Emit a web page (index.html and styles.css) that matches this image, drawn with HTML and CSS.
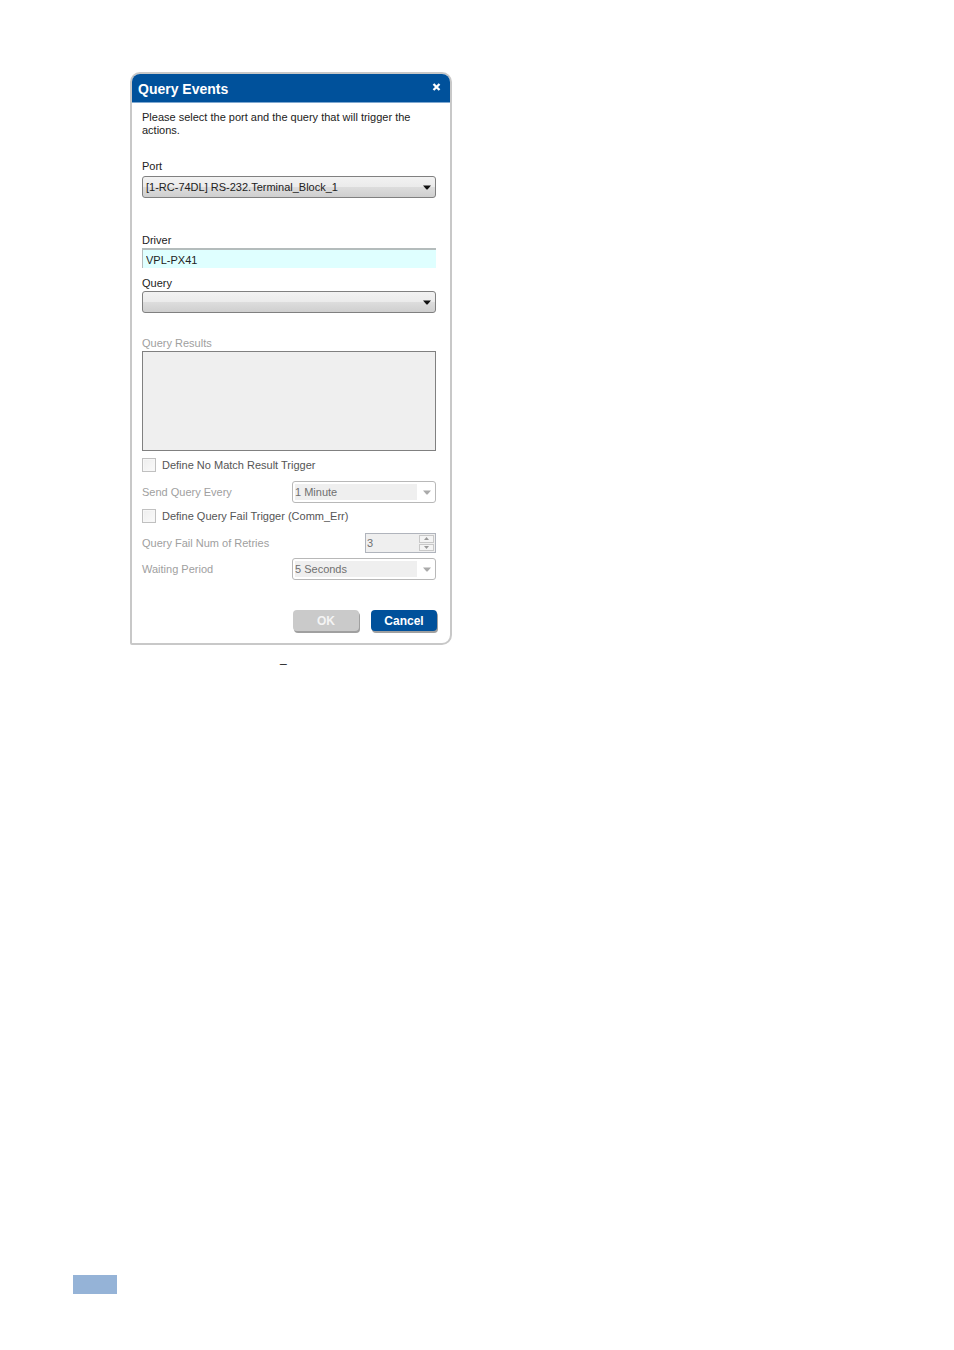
FILE: index.html
```html
<!DOCTYPE html>
<html lang="en">
<head>
<meta charset="utf-8">
<title>Query Events</title>
<link rel="stylesheet" href="styles.css">
</head>
<body>
<main class="page">
  <section class="dialog" role="dialog" aria-labelledby="dialog-title">
    <header class="titlebar">
      <h1 class="title" id="dialog-title">Query Events</h1>
      <button class="close" type="button" aria-label="Close">
        <svg width="9" height="8" viewBox="0 0 9 8"><path d="M1.5 1 7.5 7M7.5 1 1.5 7" stroke="#fff" stroke-width="2.3"/></svg>
      </button>
    </header>
    <form class="content">
      <p class="intro">Please select the port and the query that will trigger the actions.</p>

      <div class="field field-port">
        <label class="label" for="port">Port</label>
        <div class="combo">
          <select class="select" id="port"><option>[1-RC-74DL] RS-232.Terminal_Block_1</option></select>
          <svg class="arrow" width="8" height="5" viewBox="0 0 8 5"><path d="M0 .5h8L4.500 4.500h-1z"/></svg>
        </div>
      </div>

      <div class="field field-driver">
        <label class="label" for="driver">Driver</label>
        <input class="driver" id="driver" type="text" value="VPL-PX41" readonly>
      </div>

      <div class="field field-query">
        <label class="label" for="query">Query</label>
        <div class="combo">
          <select class="select" id="query"><option></option></select>
          <svg class="arrow" width="8" height="5" viewBox="0 0 8 5"><path d="M0 .5h8L4.500 4.500h-1z"/></svg>
        </div>
      </div>

      <div class="field field-results">
        <label class="label muted" for="results">Query Results</label>
        <textarea class="results" id="results" disabled></textarea>
      </div>

      <div class="options">
        <label class="check"><input class="box" type="checkbox" disabled>Define No Match Result Trigger</label>
        <div class="row">
          <label class="muted" for="interval">Send Query Every</label>
          <div class="combo combo-off">
            <select class="select select-off" id="interval" disabled><option>1 Minute</option></select>
            <svg class="arrow arrow-off" width="8" height="5" viewBox="0 0 8 5"><path d="M0 .5h8L4.500 4.500h-1z"/></svg>
          </div>
        </div>
        <label class="check"><input class="box" type="checkbox" disabled>Define Query Fail Trigger (Comm_Err)</label>
        <div class="row">
          <label class="muted" for="retries">Query Fail Num of Retries</label>
          <div class="spinner">
            <input class="number" id="retries" type="text" value="3" disabled>
            <div class="steps">
              <button class="step" type="button" aria-label="Increase" disabled><svg width="5" height="3" viewBox="0 0 5 3"><path d="M0 3 2.500 0 5 3z"/></svg></button>
              <button class="step" type="button" aria-label="Decrease" disabled><svg width="5" height="3" viewBox="0 0 5 3"><path d="M0 0 2.500 3 5 0z"/></svg></button>
            </div>
          </div>
        </div>
        <div class="row">
          <label class="muted" for="wait">Waiting Period</label>
          <div class="combo combo-off">
            <select class="select select-off" id="wait" disabled><option>5 Seconds</option></select>
            <svg class="arrow arrow-off" width="8" height="5" viewBox="0 0 8 5"><path d="M0 .5h8L4.500 4.500h-1z"/></svg>
          </div>
        </div>
      </div>

      <footer class="actions">
        <button class="button button-off" type="button" disabled>OK</button>
        <button class="button" type="button">Cancel</button>
      </footer>
    </form>
  </section>
  <p class="caption">_</p>
  <div class="marker"></div>
</main>
</body>
</html>
```
FILE: styles.css
```css
* { box-sizing: border-box; }

body {
  margin: 0;
  background: #fff;
  color: #222;
  font: 11px/14px "Liberation Sans", Arial, sans-serif;
}

h1, p { margin: 0; }

button, input, select, textarea {
  font: inherit;
  color: inherit;
  margin: 0;
}

svg { display: block; }

.page {
  display: flex;
  flex-direction: column;
  min-height: 100vh;
  padding: 72px 72px 56px 73px;
}

.dialog {
  width: 322px;
  margin-left: 57px;
  border: 2px solid #c8c8c8;
  border-radius: 10px 10px 10px 2px;
  background: #fff;
}

.titlebar {
  display: flex;
  align-items: center;
  justify-content: space-between;
  height: 29px;
  padding: 0 9px 0 6px;
  border-bottom: 1px solid #7fa8d0;
  border-radius: 8px 8px 0 0;
  background: #00519b;
  color: #fff;
}

.title {
  padding-top: 2px;
  font-size: 14px;
  line-height: 16px;
}

.close {
  padding: 0 0 2px;
  border: 0;
  background: none;
}

.content { padding: 8px 14px 12px 10px; }

.intro {
  line-height: 13px;
}

.field { display: flex; flex-direction: column; }
.label { line-height: 16px; }
.muted { color: #a0a0a0; }

.field-port { gap: 2px; margin-top: 21px; }
.field-driver { margin-top: 34px; }
.field-query { margin-top: 7px; }
.field-results { margin-top: 22px; }

.combo {
  display: grid;
  align-items: center;
  height: 22px;
  border: 1px solid #808080;
  border-radius: 3px;
  background: linear-gradient(#f2f2f2, #ebebeb 50%, #dddddd 50%, #cfcfcf);
}

.select, .arrow { grid-area: 1 / 1; }

.select {
  width: 100%;
  height: 20px;
  padding: 0 20px 0 3px;
  border: 0;
  background: none;
  appearance: none;
}

.arrow {
  justify-self: end;
  margin-right: 4px;
  fill: #111;
  pointer-events: none;
}

.driver {
  height: 20px;
  padding: 2px 3px 0;
  border: 0;
  border-top: 2px solid #b4bcbc;
  border-left: 1px solid #b4bcbc;
  background: #dfffff;
}

.results {
  height: 100px;
  border: 1px solid #808080;
  background: #efefef;
  resize: none;
}

.options {
  display: flex;
  flex-direction: column;
  gap: 4px;
  padding-top: 5px;
}

.check {
  display: flex;
  align-items: center;
  gap: 6px;
  height: 18px;
  color: #555;
}

.box {
  width: 14px;
  height: 14px;
  border: 1px solid #c0c0c0;
  background: linear-gradient(135deg, #eee, #fafafa);
  box-shadow: inset 0 0 0 1px #f7f7f7;
  appearance: none;
}

.row {
  display: flex;
  align-items: center;
  justify-content: space-between;
  height: 22px;
}

.check + .row { margin-top: 3px; }

.combo-off {
  width: 144px;
  border-color: #b8b8b8;
  background: #fff;
}

.select-off {
  width: 122px;
  height: 16px;
  margin-left: 2px;
  padding: 0;
  background: #efefef;
  color: #707070;
  opacity: 1;
}

.arrow-off { fill: #aaa; }

.spinner {
  display: flex;
  width: 71px;
  height: 20px;
  border: 1px solid #b0b4bc;
  background: #efefef;
}

.number {
  flex: 1;
  min-width: 0;
  padding: 0 1px;
  border: 0;
  background: none;
  color: #707070;
}

.steps {
  display: flex;
  flex-direction: column;
  gap: 1px;
  width: 15px;
  margin: 1px;
}

.step {
  display: flex;
  flex: 1;
  align-items: center;
  justify-content: center;
  padding: 0;
  border: 1px solid #c8c8c8;
  background: #f4f4f4;
  fill: #999;
}

.actions {
  display: flex;
  justify-content: flex-end;
  gap: 12px;
  margin: 30px -1px 0 0;
}

.button {
  width: 66px;
  height: 21px;
  padding: 0;
  border: 0;
  border-radius: 4px;
  background: #00519b;
  box-shadow: 1px 2px 0 #a0a0a0;
  color: #fff;
  font-size: 12px;
  font-weight: bold;
  line-height: 20px;
}

.button-off {
  background: #cacaca;
  color: #f4f4f4;
}

.caption {
  margin: 6px 0 0 207px;
  font-size: 12px;
}

.marker {
  width: 44px;
  height: 19px;
  margin-top: auto;
  background: #95b3d7;
}
```
